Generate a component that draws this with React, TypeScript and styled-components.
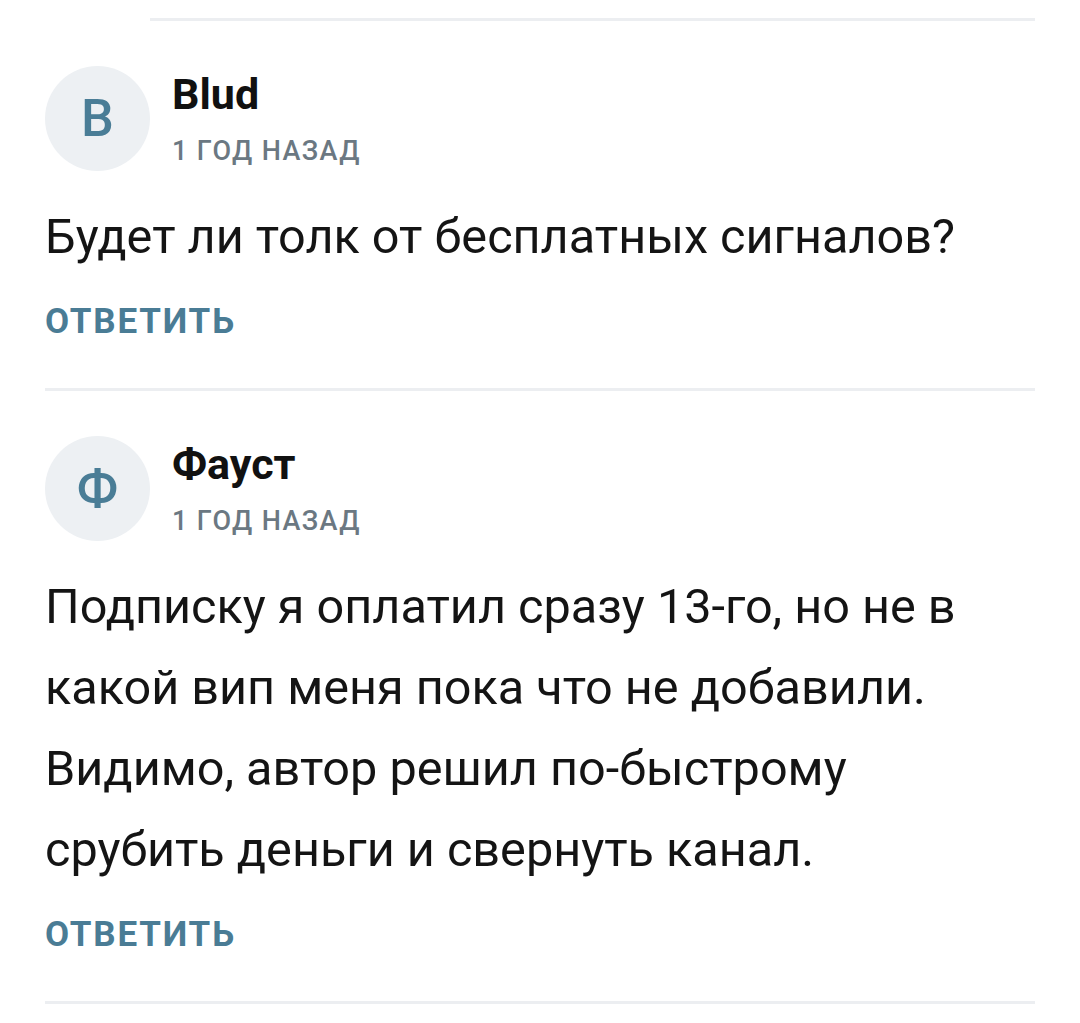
import React from "react";
import styled, { createGlobalStyle } from "styled-components";

const GlobalStyle = createGlobalStyle`
  html, body {
    margin: 0;
    padding: 0;
    background: #ffffff;
  }
  body {
    font-family: Roboto, "Noto Sans", "Liberation Sans", sans-serif;
    -webkit-font-smoothing: antialiased;
  }
`;

const Page = styled.div`
  display: flex;
  flex-direction: column;
  padding: 18px 45px 0 45px;
`;

const Divider = styled.div<{ $indent?: number }>`
  height: 3px;
  background: #eceef1;
  margin-left: ${(p) => p.$indent ?? 0}px;
`;

const Comment = styled.article`
  display: flex;
  flex-direction: column;
  padding-top: 45px;
`;

const Header = styled.div`
  display: flex;
  align-items: flex-start;
  gap: 22px;
`;

const Avatar = styled.div`
  width: 105px;
  height: 105px;
  border-radius: 50%;
  background: #edf0f3;
  color: #4a7d96;
  display: flex;
  align-items: center;
  justify-content: center;
  font-size: 52px;
  font-weight: 500;
  line-height: 1;
  flex-shrink: 0;
`;

const Meta = styled.div`
  display: flex;
  flex-direction: column;
  padding-top: 4px;
`;

const Name = styled.div`
  font-size: 43px;
  line-height: 48px;
  font-weight: 700;
  color: #111111;
`;

const Time = styled.div`
  margin-top: 17px;
  font-size: 27px;
  line-height: 32px;
  font-weight: 500;
  letter-spacing: 1.4px;
  color: #6b7882;
  text-transform: uppercase;
`;

const Text = styled.p`
  margin: 25px 0 0 0;
  padding-right: 20px;
  font-size: 48.6px;
  line-height: 81px;
  font-weight: 400;
  color: #141414;
`;

const Reply = styled.button`
  align-self: flex-start;
  margin: 25px 0 46px 0;
  padding: 0;
  border: none;
  background: none;
  font-family: inherit;
  font-size: 35px;
  line-height: 40px;
  font-weight: 700;
  letter-spacing: 1.8px;
  color: #4a7c95;
  text-transform: uppercase;
  cursor: pointer;
`;

type CommentData = {
  initial: string;
  name: string;
  time: string;
  text: string;
};

const comments: CommentData[] = [
  {
    initial: "B",
    name: "Blud",
    time: "1 год назад",
    text: "Будет ли толк от бесплатных сигналов?",
  },
  {
    initial: "Ф",
    name: "Фауст",
    time: "1 год назад",
    text:
      "Подписку я оплатил сразу 13-го, но не в какой вип меня пока что не добавили. Видимо, автор решил по-быстрому срубить деньги и свернуть канал.",
  },
];

export default function App() {
  return (
    <>
      <GlobalStyle />
      <Page>
        <Divider $indent={105} />
        {comments.map((c, i) => (
          <React.Fragment key={i}>
            <Comment>
              <Header>
                <Avatar>{c.initial}</Avatar>
                <Meta>
                  <Name>{c.name}</Name>
                  <Time>{c.time}</Time>
                </Meta>
              </Header>
              <Text>{c.text}</Text>
              <Reply>Ответить</Reply>
            </Comment>
            <Divider />
          </React.Fragment>
        ))}
      </Page>
    </>
  );
}
